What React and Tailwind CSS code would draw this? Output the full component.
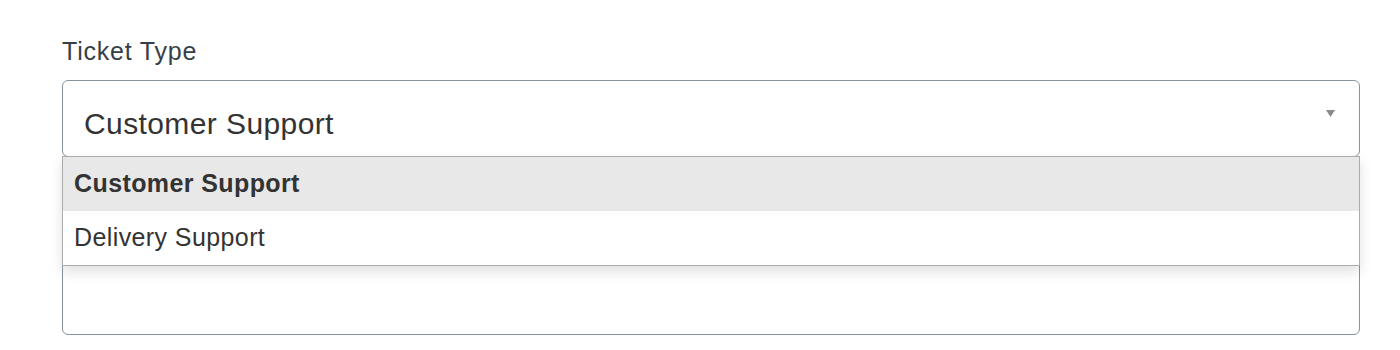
import React from "react";

export default function App() {
  return (
    <div className="w-[1400px] h-[350px] bg-white pl-[62px] pr-[40px] pt-[35px] font-['Liberation_Sans',Arial,sans-serif]">
      <label className="block text-[25px] leading-[32px] tracking-[0.8px] text-[#363f48]">Ticket Type</label>
      <div className="relative mt-[13px]">
        <div className="h-[77px] rounded-[6px] border-[1.5px] border-[#8794a0] flex items-center pl-[21px] pr-[24px]">
          <span className="flex-1 text-[30px] tracking-[0.4px] text-[#333] pt-[10px]">Customer Support</span>
          <svg width="9" height="7" viewBox="0 0 9 7" className="mb-[10px]">
            <path d="M0 0 H9 L4.5 7 Z" fill="#8a8a8a" />
          </svg>
        </div>
        <div className="mt-[30px] h-[148px] rounded-[6px] border-[1.5px] border-[#8794a0]"></div>
        <div className="absolute left-0 right-0 top-[76px] border-[1.5px] border-[#ababab] bg-white shadow-[0_6px_12px_rgba(0,0,0,0.12)] z-10">
          <div className="h-[54px] bg-[#e8e8e8] flex items-center pl-[11px] text-[25px] tracking-[0.4px] font-bold text-[#333]">Customer Support</div>
          <div className="h-[54px] bg-white flex items-center pl-[11px] text-[25px] tracking-[0.4px] text-[#333]">Delivery Support</div>
        </div>
      </div>
    </div>
  );
}
